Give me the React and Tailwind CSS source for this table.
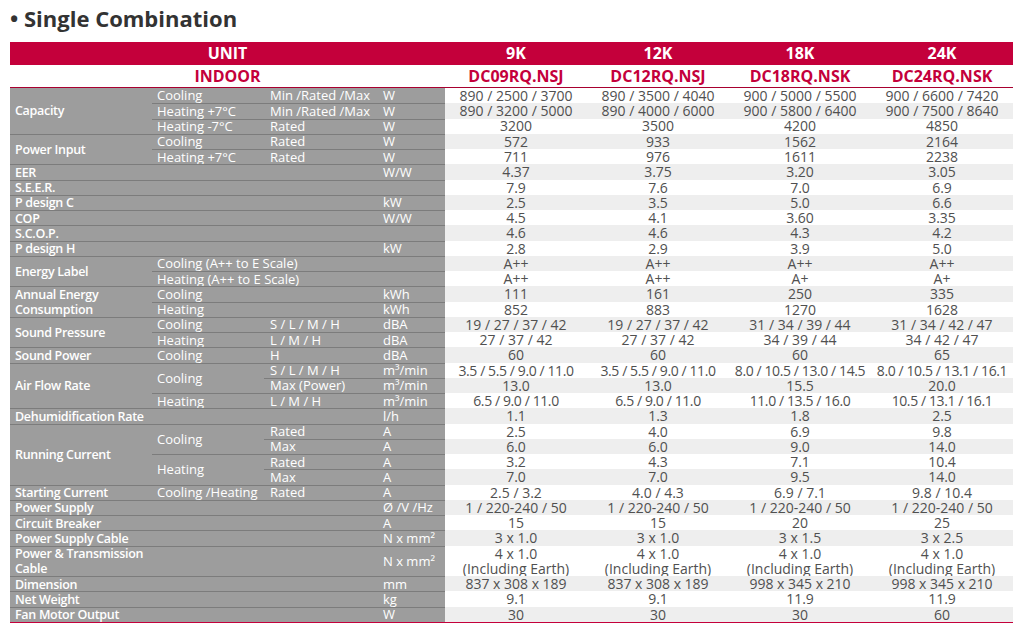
import React from "react";

const RED = "text-[#c4003b]";

const models = [
  { size: "9K", code: "DC09RQ.NSJ" },
  { size: "12K", code: "DC12RQ.NSJ" },
  { size: "18K", code: "DC18RQ.NSK" },
  { size: "24K", code: "DC24RQ.NSK" },
];

// each group: label + its rows; a row may carry sub (with span), cond, unit, values
const groups = [
  {
    label: "Capacity",
    rows: [
      { sub: "Cooling", cond: "Min /Rated /Max", unit: "W", v: ["890 / 2500 / 3700", "890 / 3500 / 4040", "900 / 5000 / 5500", "900 / 6600 / 7420"] },
      { sub: "Heating +7°C", cond: "Min /Rated /Max", unit: "W", v: ["890 / 3200 / 5000", "890 / 4000 / 6000", "900 / 5800 / 6400", "900 / 7500 / 8640"] },
      { sub: "Heating -7°C", cond: "Rated", unit: "W", v: ["3200", "3500", "4200", "4850"] },
    ],
  },
  {
    label: "Power Input",
    rows: [
      { sub: "Cooling", cond: "Rated", unit: "W", v: ["572", "933", "1562", "2164"] },
      { sub: "Heating +7°C", cond: "Rated", unit: "W", v: ["711", "976", "1611", "2238"] },
    ],
  },
  { label: "EER", wide: true, rows: [{ unit: "W/W", v: ["4.37", "3.75", "3.20", "3.05"] }] },
  { label: "S.E.E.R.", wide: true, rows: [{ unit: "", v: ["7.9", "7.6", "7.0", "6.9"] }] },
  { label: "P design C", wide: true, rows: [{ unit: "kW", v: ["2.5", "3.5", "5.0", "6.6"] }] },
  { label: "COP", wide: true, rows: [{ unit: "W/W", v: ["4.5", "4.1", "3.60", "3.35"] }] },
  { label: "S.C.O.P.", wide: true, rows: [{ unit: "", v: ["4.6", "4.6", "4.3", "4.2"] }] },
  { label: "P design H", wide: true, rows: [{ unit: "kW", v: ["2.8", "2.9", "3.9", "5.0"] }] },
  {
    label: "Energy Label",
    rows: [
      { sub: "Cooling (A++ to E Scale)", subWide: true, unit: "", v: ["A++", "A++", "A++", "A++"] },
      { sub: "Heating (A++ to E Scale)", subWide: true, unit: "", v: ["A++", "A++", "A+", "A+"] },
    ],
  },
  {
    label: "Annual Energy|Consumption",
    rows: [
      { sub: "Cooling", cond: "", unit: "kWh", v: ["111", "161", "250", "335"] },
      { sub: "Heating", cond: "", unit: "kWh", v: ["852", "883", "1270", "1628"] },
    ],
  },
  {
    label: "Sound Pressure",
    rows: [
      { sub: "Cooling", cond: "S / L / M / H", unit: "dBA", v: ["19 / 27 / 37 / 42", "19 / 27 / 37 / 42", "31 / 34 / 39 / 44", "31 / 34 / 42 / 47"] },
      { sub: "Heating", cond: "L / M / H", unit: "dBA", v: ["27 / 37 / 42", "27 / 37 / 42", "34 / 39 / 44", "34 / 42 / 47"] },
    ],
  },
  { label: "Sound Power", rows: [{ sub: "Cooling", cond: "H", unit: "dBA", v: ["60", "60", "60", "65"] }] },
  {
    label: "Air Flow Rate",
    rows: [
      { sub: "Cooling", subSpan: 2, cond: "S / L / M / H", unit: "m³/min", tight: true, v: ["3.5 / 5.5 / 9.0 / 11.0", "3.5 / 5.5 / 9.0 / 11.0", "8.0 / 10.5 / 13.0 / 14.5", "8.0 / 10.5 / 13.1 / 16.1"] },
      { cond: "Max (Power)", unit: "m³/min", v: ["13.0", "13.0", "15.5", "20.0"] },
      { sub: "Heating", cond: "L / M / H", unit: "m³/min", tight: true, v: ["6.5 / 9.0 / 11.0", "6.5 / 9.0 / 11.0", "11.0 / 13.5 / 16.0", "10.5 / 13.1 / 16.1"] },
    ],
  },
  { label: "Dehumidification Rate", wide: true, rows: [{ unit: "l/h", v: ["1.1", "1.3", "1.8", "2.5"] }] },
  {
    label: "Running Current",
    rows: [
      { sub: "Cooling", subSpan: 2, cond: "Rated", unit: "A", v: ["2.5", "4.0", "6.9", "9.8"] },
      { cond: "Max", unit: "A", v: ["6.0", "6.0", "9.0", "14.0"] },
      { sub: "Heating", subSpan: 2, cond: "Rated", unit: "A", v: ["3.2", "4.3", "7.1", "10.4"] },
      { cond: "Max", unit: "A", v: ["7.0", "7.0", "9.5", "14.0"] },
    ],
  },
  { label: "Starting Current", rows: [{ sub: "Cooling /Heating", cond: "Rated", unit: "A", v: ["2.5 / 3.2", "4.0 / 4.3", "6.9 / 7.1", "9.8 / 10.4"] }] },
  { label: "Power Supply", wide: true, rows: [{ unit: "Ø /V /Hz", v: ["1 / 220-240 / 50", "1 / 220-240 / 50", "1 / 220-240 / 50", "1 / 220-240 / 50"] }] },
  { label: "Circuit Breaker", wide: true, rows: [{ unit: "A", v: ["15", "15", "20", "25"] }] },
  { label: "Power Supply Cable", wide: true, rows: [{ unit: "N x mm²", v: ["3 x 1.0", "3 x 1.0", "3 x 1.5", "3 x 2.5"] }] },
  { label: "Power & Transmission|Cable", wide: true, tall: true, rows: [{ unit: "N x mm²", v: ["4 x 1.0|(Including Earth)", "4 x 1.0|(Including Earth)", "4 x 1.0|(Including Earth)", "4 x 1.0|(Including Earth)"] }] },
  { label: "Dimension", wide: true, rows: [{ unit: "mm", v: ["837 x 308 x 189", "837 x 308 x 189", "998 x 345 x 210", "998 x 345 x 210"] }] },
  { label: "Net Weight", wide: true, rows: [{ unit: "kg", v: ["9.1", "9.1", "11.9", "11.9"] }] },
  { label: "Fan Motor Output", wide: true, rows: [{ unit: "W", v: ["30", "30", "30", "60"] }] },
];

const rowSpan = { 1: "", 2: "row-span-2", 3: "row-span-3", 4: "row-span-4" };

function Lines({ text }) {
  const parts = text.split("|");
  return parts.map((p, i) => (
    <React.Fragment key={i}>
      {i > 0 && <br />}
      {p}
    </React.Fragment>
  ));
}

function Gray({ first, className = "", children }) {
  return (
    <div
      className={`bg-[#9d9d9d] text-white flex items-center leading-[15.3px] whitespace-nowrap ${
        first ? "" : "border-t border-[#7c7c7c]"
      } ${className}`}
    >
      {children}
    </div>
  );
}

function buildCells() {
  const cells = [];
  let stripe = 0;
  groups.forEach((g, gi) => {
    const first = gi === 0;
    const span = g.tall ? 2 : g.rows.length;
    g.rows.forEach((r, ri) => {
      const top = first && ri === 0;
      const k = `${gi}-${ri}`;
      if (ri === 0) {
        cells.push(
          <Gray
            key={k + "l"}
            first={top}
            className={`${rowSpan[span]} ${g.wide ? "col-span-3" : ""} pl-[5px] text-[12.5px] font-semibold tracking-[-0.3px]`}
          >
            <span>
              <Lines text={g.label} />
            </span>
          </Gray>
        );
      }
      if (!g.wide) {
        if (r.sub !== undefined) {
          cells.push(
            <Gray
              key={k + "s"}
              first={top}
              className={`${rowSpan[r.subSpan || 1]} ${r.subWide ? "col-span-2" : ""} pl-[5px]`}
            >
              {r.sub}
            </Gray>
          );
        }
        if (!r.subWide) {
          cells.push(
            <Gray key={k + "c"} first={top} className="pl-[6px]">
              {r.cond}
            </Gray>
          );
        }
      }
      cells.push(
        <Gray key={k + "u"} first={top} className={`${rowSpan[g.tall ? 2 : 1]} pl-[3px]`}>
          {r.unit}
        </Gray>
      );
      const bg = stripe % 2 === 0 ? "bg-white" : "bg-[#eeeeee]";
      stripe++;
      r.v.forEach((val, vi) =>
        cells.push(
          <div
            key={k + "v" + vi}
            className={`${bg} ${rowSpan[g.tall ? 2 : 1]} flex items-center justify-center text-center leading-[15.3px] text-[14px] text-[#505050] whitespace-nowrap ${
              r.tight ? "tracking-[-0.4px]" : ""
            }`}
          >
            <span>
              <Lines text={val} />
            </span>
          </div>
        )
      );
    });
  });
  return cells;
}

export default function App() {
  return (
    <div className="w-[1022px] h-[629px] bg-white overflow-hidden font-['Open_Sans',sans-serif]">
      <h1 className="h-[42px] pl-[10px] pt-[1px] text-[22px] font-bold leading-[34px] text-[#333333]">
        • Single Combination
      </h1>

      <div className="ml-[10px] w-[1003px]">
        {/* header band */}
        <div className="grid grid-cols-[435px_142px_142px_142px_142px] h-[23px] bg-[#c4003b] text-white text-[16px] font-bold leading-[23px] text-center">
          <div>UNIT</div>
          {models.map((m) => (
            <div key={m.size}>{m.size}</div>
          ))}
        </div>
        <div className={`grid grid-cols-[435px_142px_142px_142px_142px] h-[23px] border-b border-[#a8002f] ${RED} text-[16px] font-bold leading-[22px] text-center`}>
          <div>INDOOR</div>
          {models.map((m) => (
            <div key={m.code}>{m.code}</div>
          ))}
        </div>

        {/* spec grid */}
        <div className="grid grid-cols-[142px_112px_116px_65px_142px_142px_142px_142px] grid-rows-[repeat(35,minmax(0,1fr))] h-[535px] text-[13px] border-b border-[#c4003b]">
          {buildCells()}
        </div>
      </div>
    </div>
  );
}
